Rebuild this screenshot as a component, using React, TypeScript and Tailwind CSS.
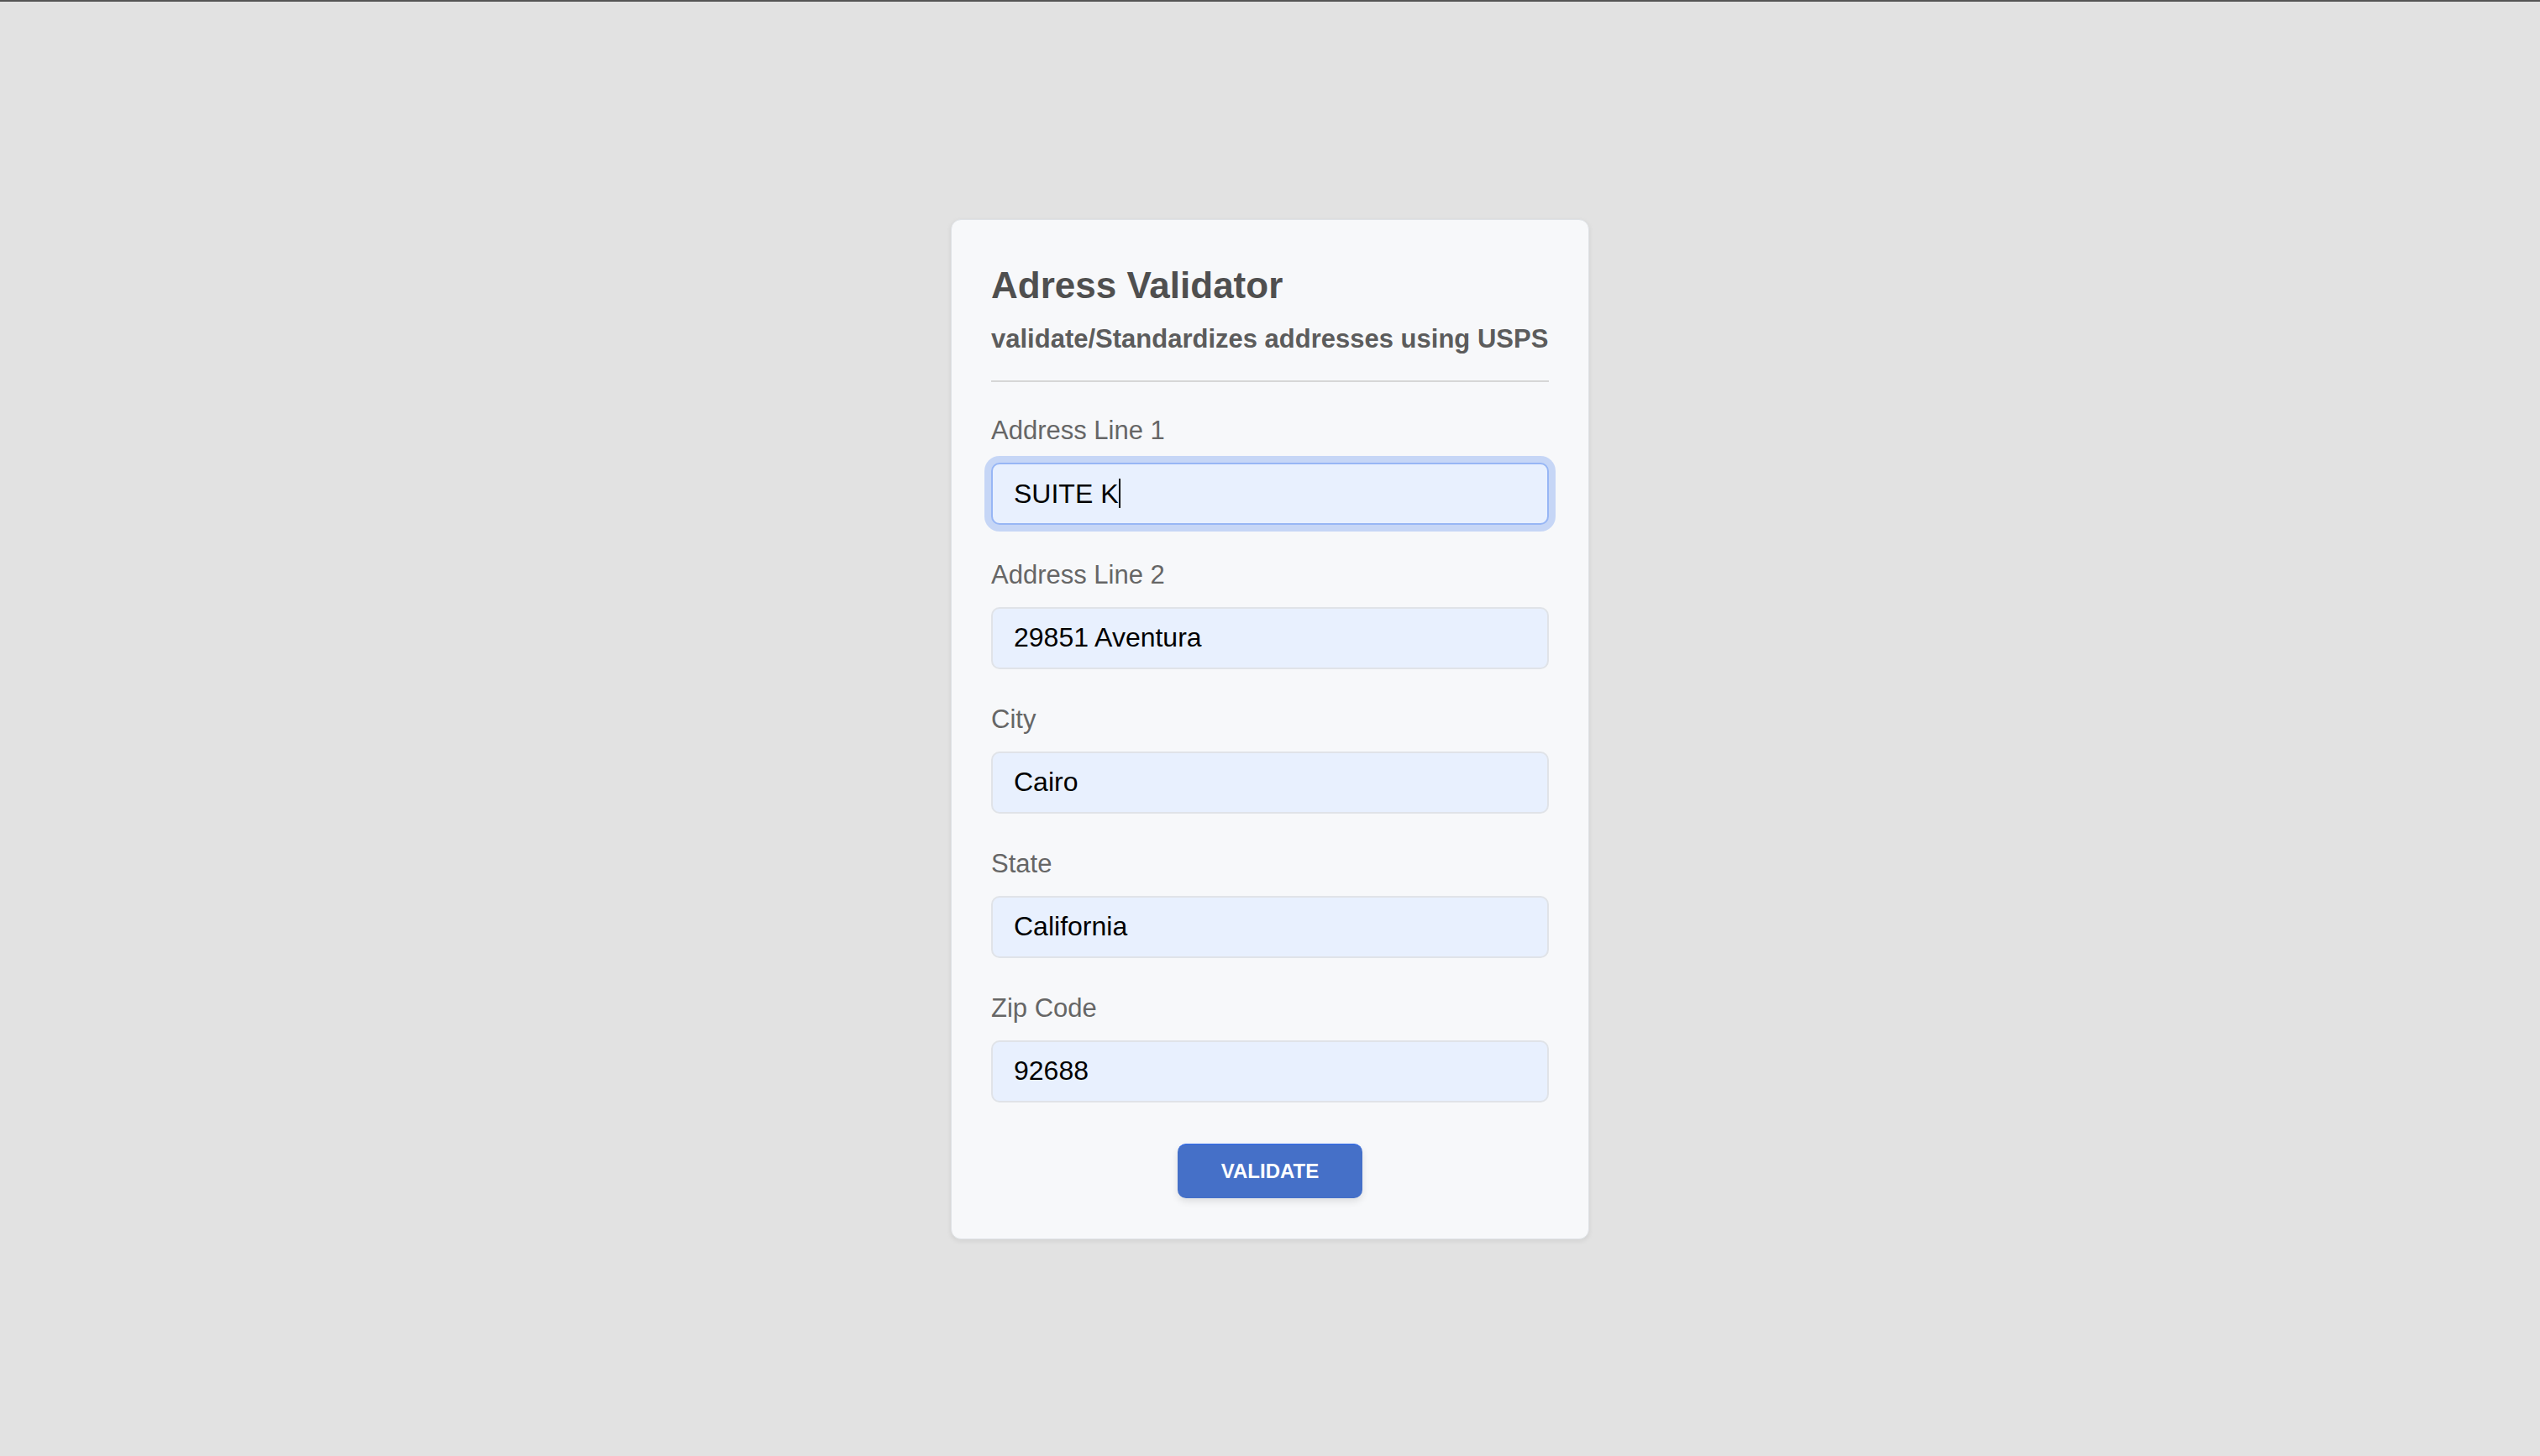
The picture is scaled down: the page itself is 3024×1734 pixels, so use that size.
import React from "react";

interface FieldProps {
  label: string;
  value: string;
  focused?: boolean;
}

const fields: FieldProps[] = [
  { label: "Address Line 1", value: "SUITE K", focused: true },
  { label: "Address Line 2", value: "29851 Aventura" },
  { label: "City", value: "Cairo" },
  { label: "State", value: "California" },
  { label: "Zip Code", value: "92688" },
];

const AddressField: React.FC<FieldProps> = ({ label, value, focused }) => {
  return (
    <div className="flex flex-col">
      <label className="text-[31px] leading-none text-[#666666]">{label}</label>
      {focused ? (
        // focused input, drawn with its caret at the end of the text
        <div className="mt-[23px] flex h-[74px] items-center rounded-[10px] border-2 border-[#97b6f5] bg-[#e8f0fe] px-[25px] text-[32px] text-black ring-8 ring-[#c6d6f6]">
          <span className="leading-none">{value}</span>
          <span className="ml-[1px] h-[35px] w-[2px] bg-black" />
        </div>
      ) : (
        <input
          readOnly
          defaultValue={value}
          className="mt-[23px] h-[74px] w-full rounded-[10px] border-2 border-[#e0e3e8] bg-[#e8f0fe] px-[25px] text-[32px] text-black outline-none"
        />
      )}
    </div>
  );
};

export default function App() {
  return (
    <div className="flex min-h-screen items-center justify-center border-t-2 border-[#555555] bg-[#e2e2e2] font-['Liberation_Sans',Arial,sans-serif]">
      <form
        className="flex w-[760px] flex-col rounded-[12px] border border-[#dfe2e6] bg-[#f7f8fa] px-[47px] pb-[48px] pt-[56px] shadow-[0_2px_6px_rgba(0,0,0,0.08)]"
        onSubmit={(e) => e.preventDefault()}
      >
        <h1 className="text-[44px] font-bold leading-none text-[#4f4f4f]">
          Adress Validator
        </h1>
        <p className="mt-[26px] text-[31px] font-bold leading-none text-[#5c5c5c]">
          validate/Standardizes addresses using USPS
        </p>
        <div className="mt-[34px] h-[2px] bg-[#d6d6d6]" />
        <div className="mt-[42px] flex flex-col gap-[44px]">
          {fields.map((f) => (
            <AddressField key={f.label} {...f} />
          ))}
        </div>
        <button
          type="submit"
          className="mx-auto mt-[49px] h-[65px] w-[220px] rounded-[10px] border-t border-[#2f6bef] bg-[#4570c8] text-[24px] font-bold text-white shadow-[0_4px_8px_rgba(0,0,0,0.1)]"
        >
          VALIDATE
        </button>
      </form>
    </div>
  );
}
